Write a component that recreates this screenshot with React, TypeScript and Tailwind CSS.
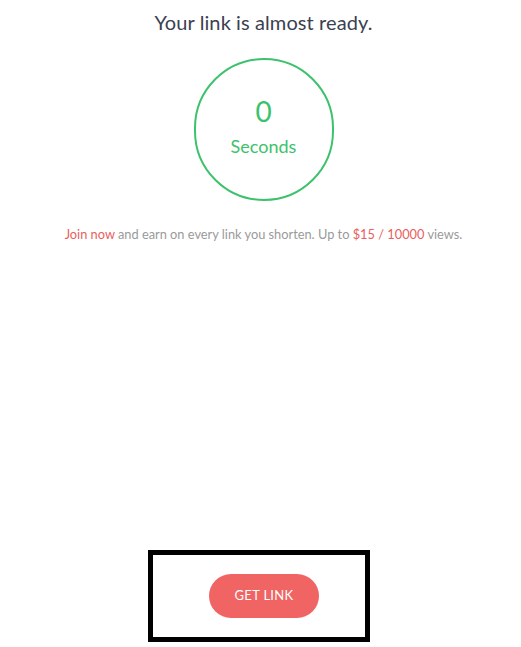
import React from 'react';

const App: React.FC = () => {
  return (
    <div
      className="w-[521px] h-[647px] bg-white flex flex-col items-center overflow-hidden pl-[6px]"
      style={{ fontFamily: 'Lato, "Open Sans", sans-serif' }}
    >
      <h1 className="mt-[8px] text-[20px] leading-[28px] text-[#3b4150] font-normal tracking-[0.1px]">
        Your link is almost ready.
      </h1>

      <div className="mt-[22px] w-[140px] h-[143px] rounded-full border-2 border-[#3dc26c] flex flex-col items-center justify-center text-[#3dc26c]">
        <div className="text-[28px] leading-[32px] mt-[-8px]">0</div>
        <div className="text-[18px] leading-[22px] mt-[8px]">Seconds</div>
      </div>

      <p className="mt-[25px] text-[12.8px] leading-[16px] text-[#9a9a9a]">
        <a href="#" className="text-[#ea5d5d]">Join now</a> and earn on every link you shorten. Up to{' '}
        <span className="text-[#ea5d5d]">$15 / 10000</span> views.
      </p>

      <div className="mt-[308px] ml-[-9px] w-[222px] h-[92px] border-[5px] border-black flex items-center pl-[56px]">
        <button className="w-[110px] h-[44px] rounded-full bg-[#f06464] text-white text-[13px] tracking-[0.3px]">
          GET LINK
        </button>
      </div>
    </div>
  );
};

export default App;
